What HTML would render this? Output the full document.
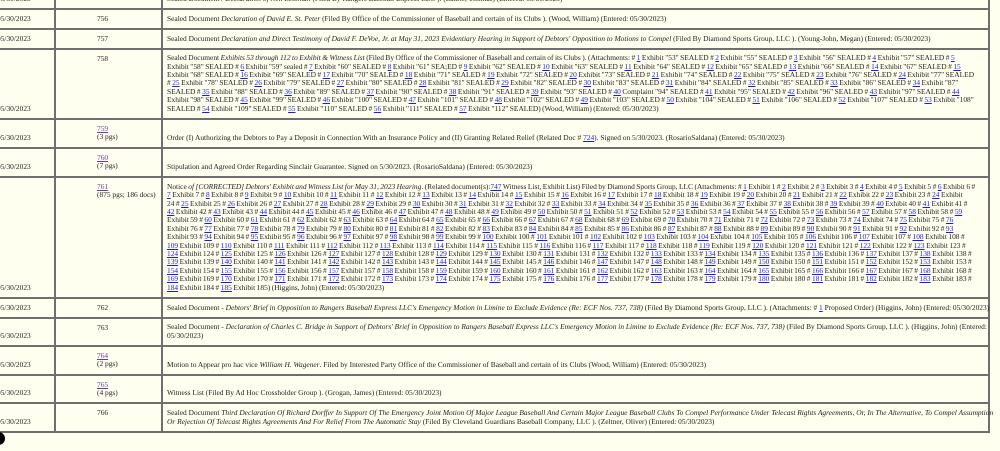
<!DOCTYPE html>
<html><head><meta charset="utf-8"><style>
html,body{margin:0;padding:0;background:#fffff0;width:1000px;height:451px;overflow:hidden;position:relative;font-family:"Liberation Serif",serif;font-size:7.42px;color:#222;line-height:8.4px}
.r{position:absolute;left:0;width:989px;border-bottom:2px solid #6f6f6f}
.vl{position:absolute;top:0;width:2px;height:433px;background:#6f6f6f}
.d{position:absolute;left:-3px;bottom:5px;white-space:nowrap}
.n{position:absolute;left:97px;top:5px;white-space:nowrap}
.t{position:absolute;left:167px;bottom:5px;white-space:nowrap}
.x{word-spacing:-0.35px}
u{color:#1a1aee}
u.v{color:#6a3a9b}
</style></head><body>
<div class="vl" style="left:54px"></div>
<div class="vl" style="left:161px"></div>
<div class="vl" style="left:988px"></div>

<div class="r" style="top:-12px;height:20px">
<div class="d">05/30/2023</div><div class="n">755</div>
<div class="t">Sealed Document / <i>Declaration of Neil Leibman</i> (Filed By Rangers Baseball Express LLC ). (Laurie, Thomas) (Entered: 05/30/2023)</div></div>

<div class="r" style="top:10px;height:18px">
<div class="d">05/30/2023</div><div class="n">756</div>
<div class="t">Sealed Document <i>Declaration of David E. St. Peter</i> (Filed By Office of the Commissioner of Baseball and certain of its Clubs ). (Wood, William) (Entered: 05/30/2023)</div></div>

<div class="r" style="top:30px;height:18px">
<div class="d">05/30/2023</div><div class="n">757</div>
<div class="t">Sealed Document <i>Declaration and Direct Testimony of David F. DeVoe, Jr. at May 31, 2023 Evidentiary Hearing in Support of Debtors' Opposition to Motions to Compel</i> (Filed By Diamond Sports Group, LLC ). (Young-John, Megan) (Entered: 05/30/2023)</div></div>

<div class="r" style="top:50px;height:68px">
<div class="d">05/30/2023</div><div class="n">758</div>
<div class="t x">
<div>Sealed Document <i>Exhibits 53 through 112 to Exhibit &amp; Witness List</i> (Filed By Office of the Commissioner of Baseball and certain of its Clubs ). (Attachments: # <u>1</u> Exhibit "53" SEALED # <u>2</u> Exhibit "55" SEALED # <u>3</u> Exhibit "56" SEALED # <u>4</u> Exhibit "57" SEALED # <u>5</u></div>
<div>Exhibit "58" SEALED # <u>6</u> Exhibit "59" sealed # <u>7</u> Exhibit "60" SEALED # <u>8</u> Exhibit "61" SEA;ED # <u>9</u> Exhibit "62" SEALED # <u>10</u> Exhibit "63" SEALED # <u>11</u> Exhibit "64" SEALED # <u>12</u> Exhibit "65" SEALED # <u>13</u> Exhibit "66" SEALED # <u>14</u> Exhibit "67" SEALED # <u>15</u></div>
<div>Exhibit "68" SEALED # <u>16</u> Exhibit "69" SEALED # <u>17</u> Exhibit "70" SEALED # <u>18</u> Exhibit "71" SEALED # <u>19</u> Exhibit "72" SEALED # <u>20</u> Exhibit "73" SEALED # <u>21</u> Exhibit "74" SEALED # <u>22</u> Exhibit "75" SEALED # <u>23</u> Exhibit "76" SEALED # <u>24</u> Exhibit "77" SEALED</div>
<div># <u>25</u> Exhibit "78" SEALED # <u>26</u> Exhibit "79" SEALED # <u>27</u> Exhibit "80" SEALED # <u>28</u> Exhibit "81" SEALED # <u>29</u> Exhibit "82" SEALED # <u>30</u> Exhibit "83" SEALED # <u>31</u> Exhibit "84" SEALED # <u>32</u> Exhibit "85" SEALED # <u>33</u> Exhibit "86" SEALED # <u>34</u> Exhibit "87"</div>
<div>SEALED # <u>35</u> Exhibit "88" SEALED # <u>36</u> Exhibit "89" SEALED # <u>37</u> Exhibit "90" SEALED # <u>38</u> Exhibit "91" SEALED # <u>39</u> Exhibit "93" SEALED # <u>40</u> Complaint "94" SEALED # <u>41</u> Exhibit "95" SEALED # <u>42</u> Exhibit "96" SEALED # <u>43</u> Exhibit "97" SEALED # <u>44</u></div>
<div>Exhibit "98" SEALED # <u>45</u> Exhibit "99" SEALED # <u>46</u> Exhibit "100" SEALED # <u>47</u> Exhibit "101" SEALED # <u>48</u> Exhibit "102" SEALED # <u>49</u> Exhibit "103" SEALED # <u>50</u> Exhibit "104" SEALED # <u>51</u> Exhibit "106" SEALED # <u>52</u> Exhibit "107" SEALED # <u>53</u> Exhibit "108"</div>
<div>SEALED # <u>54</u> Exhibit "109" SEALED # <u>55</u> Exhibit "110" SEALED # <u>56</u> Exhibit "111" SEALED # <u>57</u> Exhibit "112" SEALED) (Wood, William) (Entered: 05/30/2023)</div>
</div></div>

<div class="r" style="top:120px;height:27px">
<div class="d">05/30/2023</div><div class="n"><u class="v">759</u><br>(3 pgs)</div>
<div class="t">Order (I) Authorizing the Debtors to Pay a Deposit in Connection With an Insurance Policy and (II) Granting Related Relief (Related Doc # <u>724</u>). Signed on 5/30/2023. (RosarioSaldana) (Entered: 05/30/2023)</div></div>

<div class="r" style="top:149px;height:27px">
<div class="d">05/30/2023</div><div class="n"><u class="v">760</u><br>(7 pgs)</div>
<div class="t">Stipulation and Agreed Order Regarding Sinclair Guarantee. Signed on 5/30/2023. (RosarioSaldana) (Entered: 05/30/2023)</div></div>

<div class="r" style="top:178px;height:119px">
<div class="d">05/30/2023</div><div class="n"><u class="v">761</u><br>(875 pgs; 186 docs)</div>
<div class="t x">
<div>Notice <i>of [CORRECTED] Debtors' Exhibit and Witness List for May 31, 2023 Hearing</i>. (Related document(s):<u>747</u> Witness List, Exhibit List) Filed by Diamond Sports Group, LLC (Attachments: # <u>1</u> Exhibit 1 # <u>2</u> Exhibit 2 # <u>3</u> Exhibit 3 # <u>4</u> Exhibit 4 # <u>5</u> Exhibit 5 # <u>6</u> Exhibit 6 #</div>
<div><u>7</u> Exhibit 7 # <u>8</u> Exhibit 8 # <u>9</u> Exhibit 9 # <u>10</u> Exhibit 10 # <u>11</u> Exhibit 11 # <u>12</u> Exhibit 12 # <u>13</u> Exhibit 13 # <u>14</u> Exhibit 14 # <u>15</u> Exhibit 15 # <u>16</u> Exhibit 16 # <u>17</u> Exhibit 17 # <u>18</u> Exhibit 18 # <u>19</u> Exhibit 19 # <u>20</u> Exhibit 20 # <u>21</u> Exhibit 21 # <u>22</u> Exhibit 22 # <u>23</u> Exhibit 23 # <u>24</u> Exhibit</div>
<div>24 # <u>25</u> Exhibit 25 # <u>26</u> Exhibit 26 # <u>27</u> Exhibit 27 # <u>28</u> Exhibit 28 # <u>29</u> Exhibit 29 # <u>30</u> Exhibit 30 # <u>31</u> Exhibit 31 # <u>32</u> Exhibit 32 # <u>33</u> Exhibit 33 # <u>34</u> Exhibit 34 # <u>35</u> Exhibit 35 # <u>36</u> Exhibit 36 # <u>37</u> Exhibit 37 # <u>38</u> Exhibit 38 # <u>39</u> Exhibit 39 # <u>40</u> Exhibit 40 # <u>41</u> Exhibit 41 #</div>
<div><u>42</u> Exhibit 42 # <u>43</u> Exhibit 43 # <u>44</u> Exhibit 44 # <u>45</u> Exhibit 45 # <u>46</u> Exhibit 46 # <u>47</u> Exhibit 47 # <u>48</u> Exhibit 48 # <u>49</u> Exhibit 49 # <u>50</u> Exhibit 50 # <u>51</u> Exhibit 51 # <u>52</u> Exhibit 52 # <u>53</u> Exhibit 53 # <u>54</u> Exhibit 54 # <u>55</u> Exhibit 55 # <u>56</u> Exhibit 56 # <u>57</u> Exhibit 57 # <u>58</u> Exhibit 58 # <u>59</u></div>
<div>Exhibit 59 # <u>60</u> Exhibit 60 # <u>61</u> Exhibit 61 # <u>62</u> Exhibit 62 # <u>63</u> Exhibit 63 # <u>64</u> Exhibit 64 # <u>65</u> Exhibit 65 # <u>66</u> Exhibit 66 # <u>67</u> Exhibit 67 # <u>68</u> Exhibit 68 # <u>69</u> Exhibit 69 # <u>70</u> Exhibit 70 # <u>71</u> Exhibit 71 # <u>72</u> Exhibit 72 # <u>73</u> Exhibit 73 # <u>74</u> Exhibit 74 # <u>75</u> Exhibit 75 # <u>76</u></div>
<div>Exhibit 76 # <u>77</u> Exhibit 77 # <u>78</u> Exhibit 78 # <u>79</u> Exhibit 79 # <u>80</u> Exhibit 80 # <u>81</u> Exhibit 81 # <u>82</u> Exhibit 82 # <u>83</u> Exhibit 83 # <u>84</u> Exhibit 84 # <u>85</u> Exhibit 85 # <u>86</u> Exhibit 86 # <u>87</u> Exhibit 87 # <u>88</u> Exhibit 88 # <u>89</u> Exhibit 89 # <u>90</u> Exhibit 90 # <u>91</u> Exhibit 91 # <u>92</u> Exhibit 92 # <u>93</u></div>
<div>Exhibit 93 # <u>94</u> Exhibit 94 # <u>95</u> Exhibit 95 # <u>96</u> Exhibit 96 # <u>97</u> Exhibit 97 # <u>98</u> Exhibit 98 # <u>99</u> Exhibit 99 # <u>100</u> Exhibit 100 # <u>101</u> Exhibit 101 # <u>102</u> Exhibit 102 # <u>103</u> Exhibit 103 # <u>104</u> Exhibit 104 # <u>105</u> Exhibit 105 # <u>106</u> Exhibit 106 # <u>107</u> Exhibit 107 # <u>108</u> Exhibit 108 #</div>
<div><u>109</u> Exhibit 109 # <u>110</u> Exhibit 110 # <u>111</u> Exhibit 111 # <u>112</u> Exhibit 112 # <u>113</u> Exhibit 113 # <u>114</u> Exhibit 114 # <u>115</u> Exhibit 115 # <u>116</u> Exhibit 116 # <u>117</u> Exhibit 117 # <u>118</u> Exhibit 118 # <u>119</u> Exhibit 119 # <u>120</u> Exhibit 120 # <u>121</u> Exhibit 121 # <u>122</u> Exhibit 122 # <u>123</u> Exhibit 123 #</div>
<div><u>124</u> Exhibit 124 # <u>125</u> Exhibit 125 # <u>126</u> Exhibit 126 # <u>127</u> Exhibit 127 # <u>128</u> Exhibit 128 # <u>129</u> Exhibit 129 # <u>130</u> Exhibit 130 # <u>131</u> Exhibit 131 # <u>132</u> Exhibit 132 # <u>133</u> Exhibit 133 # <u>134</u> Exhibit 134 # <u>135</u> Exhibit 135 # <u>136</u> Exhibit 136 # <u>137</u> Exhibit 137 # <u>138</u> Exhibit 138 #</div>
<div><u>139</u> Exhibit 139 # <u>140</u> Exhibit 140 # <u>141</u> Exhibit 141 # <u>142</u> Exhibit 142 # <u>143</u> Exhibit 143 # <u>144</u> Exhibit 144 # <u>145</u> Exhibit 145 # <u>146</u> Exhibit 146 # <u>147</u> Exhibit 147 # <u>148</u> Exhibit 148 # <u>149</u> Exhibit 149 # <u>150</u> Exhibit 150 # <u>151</u> Exhibit 151 # <u>152</u> Exhibit 152 # <u>153</u> Exhibit 153 #</div>
<div><u>154</u> Exhibit 154 # <u>155</u> Exhibit 155 # <u>156</u> Exhibit 156 # <u>157</u> Exhibit 157 # <u>158</u> Exhibit 158 # <u>159</u> Exhibit 159 # <u>160</u> Exhibit 160 # <u>161</u> Exhibit 161 # <u>162</u> Exhibit 162 # <u>163</u> Exhibit 163 # <u>164</u> Exhibit 164 # <u>165</u> Exhibit 165 # <u>166</u> Exhibit 166 # <u>167</u> Exhibit 167 # <u>168</u> Exhibit 168 #</div>
<div><u>169</u> Exhibit 169 # <u>170</u> Exhibit 170 # <u>171</u> Exhibit 171 # <u>172</u> Exhibit 172 # <u>173</u> Exhibit 173 # <u>174</u> Exhibit 174 # <u>175</u> Exhibit 175 # <u>176</u> Exhibit 176 # <u>177</u> Exhibit 177 # <u>178</u> Exhibit 178 # <u>179</u> Exhibit 179 # <u>180</u> Exhibit 180 # <u>181</u> Exhibit 181 # <u>182</u> Exhibit 182 # <u>183</u> Exhibit 183 #</div>
<div><u>184</u> Exhibit 184 # <u>185</u> Exhibit 185) (Higgins, John) (Entered: 05/30/2023)</div>
</div></div>

<div class="r" style="top:299px;height:18px">
<div class="d">05/30/2023</div><div class="n">762</div>
<div class="t">Sealed Document - <i>Debtors' Brief in Opposition to Rangers Baseball Express LLC's Emergency Motion in Limine to Exclude Evidence (Re: ECF Nos. 737, 738)</i> (Filed By Diamond Sports Group, LLC ). (Attachments: # <u>1</u> Proposed Order) (Higgins, John) (Entered: 05/30/2023)</div></div>

<div class="r" style="top:319px;height:26px">
<div class="d">05/30/2023</div><div class="n">763</div>
<div class="t"><div>Sealed Document - <i>Declaration of Charles C. Bridge in Support of Debtors' Brief in Opposition to Rangers Baseball Express LLC's Emergency Motion in Limine to Exclude Evidence (Re: ECF Nos. 737, 738)</i> (Filed By Diamond Sports Group, LLC ). (Higgins, John) (Entered:</div><div>05/30/2023)</div></div></div>

<div class="r" style="top:347px;height:27px">
<div class="d">05/30/2023</div><div class="n"><u class="v">764</u><br>(2 pgs)</div>
<div class="t">Motion to Appear pro hac vice <i>William H. Wagener</i>. Filed by Interested Party Office of the Commissioner of Baseball and certain of its Clubs (Wood, William) (Entered: 05/30/2023)</div></div>

<div class="r" style="top:376px;height:26px">
<div class="d">05/30/2023</div><div class="n"><u class="v">765</u><br>(4 pgs)</div>
<div class="t">Witness List (Filed By Ad Hoc Crossholder Group ). (Grogan, James) (Entered: 05/30/2023)</div></div>

<div class="r" style="top:404px;height:27px">
<div class="d">05/30/2023</div><div class="n">766</div>
<div class="t"><div>Sealed Document <i>Third Declaration Of Richard Dorffer In Support Of The Emergency Joint Motion Of Major League Baseball And Certain Major League Baseball Clubs To Compel Performance Under Telecast Rights Agreements, Or, In The Alternative, To Compel Assumption</i></div><div><i>Or Rejection Of Telecast Rights Agreements And For Relief From The Automatic Stay</i> (Filed By Cleveland Guardians Baseball Company, LLC ). (Zeltner, Oliver) (Entered: 05/30/2023)</div></div></div>

<div style="position:absolute;left:-8px;top:432px;width:13px;height:13px;border-radius:50%;background:#000"></div>
</body></html>
